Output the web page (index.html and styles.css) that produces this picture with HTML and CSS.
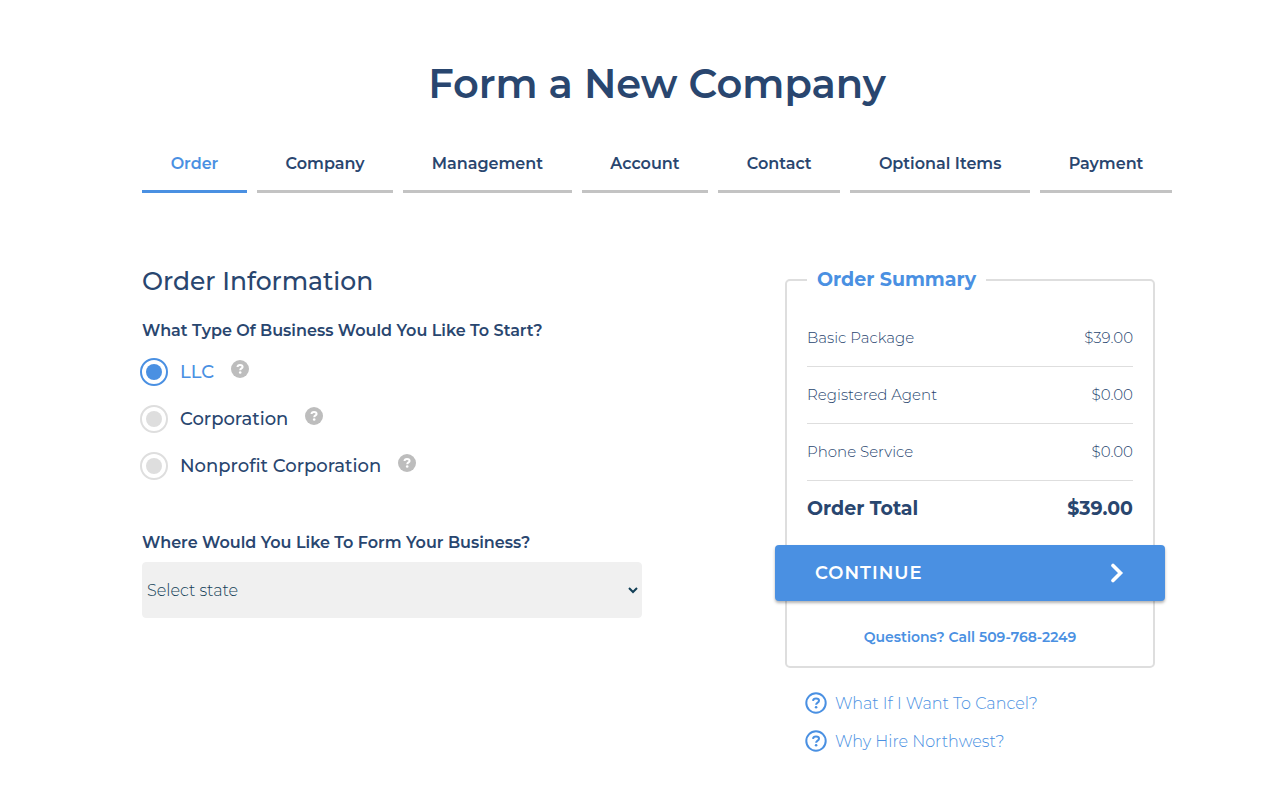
FILE: index.html
```html
<!DOCTYPE html>
<html lang="en">
<head>
<meta charset="utf-8">
<meta name="viewport" content="width=device-width, initial-scale=1">
<title>Form a New Company</title>
<link rel="stylesheet" href="styles.css">
</head>
<body>
<svg class="sprite" aria-hidden="true">
  <symbol id="help-solid" viewBox="0 0 18 18">
    <circle cx="9" cy="9" r="9" fill="#bdbdbd"/>
    <path d="M6.500 7C6.600 5.500 7.600 4.900 9 4.900c1.500 0 2.600.8 2.600 2 0 1.600-2.400 1.500-2.400 3.300" fill="none" stroke="#fff" stroke-width="2"/>
    <circle cx="9.200" cy="12.500" r="1.300" fill="#fff"/>
  </symbol>
  <symbol id="help-ring" viewBox="0 0 22 22">
    <circle cx="11" cy="11" r="9.700" fill="none" stroke="#4a90e2" stroke-width="2"/>
    <path d="M8 8.800C8.200 7.300 9.300 6.500 11 6.500c1.800 0 3 .9 3 2.300 0 1.900-2.900 1.900-2.900 4" fill="none" stroke="#4a90e2" stroke-width="2"/>
    <circle cx="11.100" cy="15.200" r="1.300" fill="#4a90e2"/>
  </symbol>
</svg>
<main class="page">
  <h1 class="page-title">Form a New Company</h1>
  <nav class="steps" aria-label="Order steps">
    <a class="step step-active" href="#order" aria-current="step">Order</a>
    <a class="step" href="#company">Company</a>
    <a class="step" href="#management">Management</a>
    <a class="step" href="#account">Account</a>
    <a class="step" href="#contact">Contact</a>
    <a class="step" href="#items">Optional Items</a>
    <a class="step" href="#payment">Payment</a>
  </nav>
  <form class="columns">
    <section class="details">
      <h2 class="section-title">Order Information</h2>
      <fieldset class="types">
        <legend class="question">What Type Of Business Would You Like To Start?</legend>
        <div class="type">
          <input class="radio" type="radio" name="type" id="llc" checked>
          <label class="type-label" for="llc">LLC</label>
          <button class="help" type="button" aria-label="About LLC"><svg class="help-icon"><use href="#help-solid"/></svg></button>
        </div>
        <div class="type">
          <input class="radio" type="radio" name="type" id="corp">
          <label class="type-label" for="corp">Corporation</label>
          <button class="help" type="button" aria-label="About corporations"><svg class="help-icon"><use href="#help-solid"/></svg></button>
        </div>
        <div class="type">
          <input class="radio" type="radio" name="type" id="nonprofit">
          <label class="type-label" for="nonprofit">Nonprofit Corporation</label>
          <button class="help" type="button" aria-label="About nonprofits"><svg class="help-icon"><use href="#help-solid"/></svg></button>
        </div>
      </fieldset>
      <label class="question" for="state">Where Would You Like To Form Your Business?</label>
      <select class="state" id="state"><option>Select state</option></select>
    </section>
    <aside class="side">
      <fieldset class="summary">
        <legend class="summary-title">Order Summary</legend>
        <table class="items">
          <tbody>
            <tr><th scope="row">Basic Package</th><td>$39.00</td></tr>
            <tr><th scope="row">Registered Agent</th><td>$0.00</td></tr>
            <tr><th scope="row">Phone Service</th><td>$0.00</td></tr>
          </tbody>
          <tfoot>
            <tr><th scope="row">Order Total</th><td>$39.00</td></tr>
          </tfoot>
        </table>
        <button class="continue" type="submit">CONTINUE
          <svg class="chevron" viewBox="0 0 14 20" aria-hidden="true"><path d="M3 2.500l7.500 7.500L3 17.500" fill="none" stroke="#fff" stroke-width="3.600" stroke-linecap="round"/></svg>
        </button>
        <a class="phone" href="tel:509-768-2249">Questions? Call 509-768-2249</a>
      </fieldset>
      <ul class="links">
        <li><a class="link" href="#cancel"><svg class="link-icon" aria-hidden="true"><use href="#help-ring"/></svg>What If I Want To Cancel?</a></li>
        <li><a class="link" href="#why"><svg class="link-icon" aria-hidden="true"><use href="#help-ring"/></svg>Why Hire Northwest?</a></li>
      </ul>
    </aside>
  </form>
</main>
</body>
</html>
```
FILE: styles.css
```css
* { box-sizing: border-box; }
body {
  margin: 0;
  background: #fff;
  color: #29466f;
  font-family: Montserrat, Inter, sans-serif;
  font-size: 16px;
}
a { color: inherit; text-decoration: none; }
button, select { font: inherit; }
fieldset { margin: 0; padding: 0; border: 0; min-width: 0; }
.sprite { display: none; }
.page { padding: 57px 92px 40px 142px; }
.page-title {
  margin: 0;
  font-size: 40px;
  font-weight: 600;
  line-height: 54px;
  text-align: center;
}
.steps { display: flex; gap: 10px; margin-top: 23px; }
.step {
  flex: 1 1 auto;
  padding: 19px 16px 15px;
  border-bottom: 3px solid #c3c3c3;
  font-weight: 600;
  line-height: 22px;
  text-align: center;
}
.step-active { border-color: #4a90e2; color: #4a90e2; }
.columns {
  display: flex;
  justify-content: space-between;
  gap: 40px;
  padding: 72px 17px 0 0;
}
.details { flex: 0 1 500px; }
.section-title {
  margin: 0 0 24px;
  font-size: 25px;
  font-weight: 500;
  line-height: 32px;
}
.question {
  display: block;
  padding: 0;
  font-size: 16px;
  font-weight: 600;
  line-height: 20px;
}
.types { margin-bottom: 44px; }
.type {
  display: flex;
  align-items: center;
  height: 47px;
  margin-left: -2px;
}
.type:first-of-type { margin-top: 7px; }
.radio {
  appearance: none;
  width: 28px;
  height: 28px;
  margin: 0 12px 0 0;
  border: 2px solid #dedede;
  border-radius: 50%;
  background: #dedede;
  background-clip: content-box;
  padding: 4px;
}
.radio:checked { border-color: #4a90e2; background-color: #4a90e2; }
.type-label { font-size: 18px; font-weight: 500; line-height: 22px; }
.radio:checked + .type-label { color: #4a90e2; }
.help {
  display: flex;
  margin: 0 0 6px 17px;
  padding: 0;
  border: 0;
  background: none;
}
.help-icon { width: 18px; height: 18px; }
.state {
  display: block;
  width: 100%;
  height: 56px;
  margin-top: 9px;
  border: 1px solid #f0f0f0;
  border-radius: 4px;
  background: #f0f0f0;
  color: #123f57;
  font-weight: 300;
}
.side { flex: 0 0 370px; }
.summary {
  border: 2px solid #dedede;
  border-radius: 5px;
  padding: 14px 20px 19px;
}
.summary-title {
  padding: 0 10px;
  color: #4a90e2;
  font-size: 19px;
  font-weight: 700;
  line-height: 30px;
}
.items { width: 100%; border-collapse: collapse; }
.items th, .items td {
  height: 57px;
  padding: 0;
  border-bottom: 1px solid #dedede;
  font-size: 15px;
  font-weight: 300;
  text-align: left;
}
.items td { text-align: right; }
.items tfoot th, .items tfoot td {
  height: 56px;
  border: 0;
  font-size: 19px;
  font-weight: 700;
}
.continue {
  display: flex;
  align-items: center;
  justify-content: space-between;
  width: calc(100% + 64px);
  height: 56px;
  margin: 9px -32px 0;
  padding: 0 41px 0 40px;
  border: 0;
  border-radius: 4px;
  background: #4a90e2;
  box-shadow: 0 2px 3px rgba(0, 0, 0, .3);
  color: #fff;
  font-size: 18px;
  font-weight: 600;
  letter-spacing: 1px;
}
.chevron { width: 14px; height: 20px; }
.phone {
  display: block;
  margin-top: 26px;
  color: #4a90e2;
  font-size: 14px;
  font-weight: 600;
  line-height: 20px;
  text-align: center;
}
.links { margin: 16px 0 0; padding: 0 0 0 20px; list-style: none; }
.link {
  display: flex;
  align-items: center;
  gap: 8px;
  height: 38px;
  color: #4a90e2;
  font-size: 16px;
  font-weight: 300;
}
.link-icon { width: 22px; height: 22px; }
```
